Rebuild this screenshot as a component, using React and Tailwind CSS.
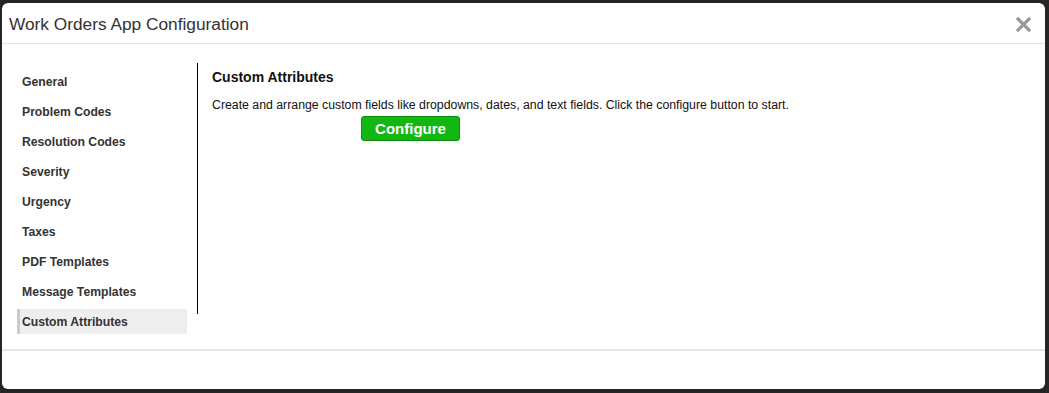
import React, { useState } from 'react'

const sections = [
  'General',
  'Problem Codes',
  'Resolution Codes',
  'Severity',
  'Urgency',
  'Taxes',
  'PDF Templates',
  'Message Templates',
  'Custom Attributes',
]

const App = () => {
  const [active, setActive] = useState('Custom Attributes')

  return (
    <div className="h-[393px] w-[1049px] bg-[#262626] pt-[3px] pl-[2px] pr-[4px] pb-[4px] font-['Liberation_Sans',Arial,sans-serif]">
      <div className="flex h-[386px] flex-col rounded-[6px] bg-white">
        {/* Header */}
        <div className="flex h-[41px] items-center justify-between border-b border-[#e5e5e5] pt-[3px] pl-[7px] pr-[14px]">
          <h3 className="text-[17.3px] text-[#333]">Work Orders App Configuration</h3>
          <button className="text-[#999]">
            <svg width="15" height="15" viewBox="0 0 15 15">
              <path d="M2 2L13 13M13 2L2 13" stroke="currentColor" strokeWidth="3.2" strokeLinecap="square" />
            </svg>
          </button>
        </div>

        {/* Body */}
        <div className="flex h-[305px] pt-[19px] pl-[15px]">
          <ul className="w-[172px] pt-[6px]">
            {sections.map((s) => (
              <li key={s}>
                <button
                  onClick={() => setActive(s)}
                  className={`flex h-[25px] w-[170px] mb-[5px] items-center pt-[1px] text-left text-[12.2px] font-bold text-[#333] ${
                    active === s ? 'border-l-[3px] border-[#ccc] bg-[#eee] pl-[2px]' : 'pl-[5px]'
                  }`}
                >
                  {s}
                </button>
              </li>
            ))}
          </ul>
          <div className="ml-[8px] h-[251px] border-l border-black pl-[14px] pt-[4px]">
            <h4 className="text-[14px] font-bold text-[#111]">Custom Attributes</h4>
            <p className="mt-[8px] text-[12.3px] text-[#111]">
              Create and arrange custom fields like dropdowns, dates, and text fields. Click the configure button to start.
            </p>
            <button className="ml-[149px] mt-[2px] h-[25px] w-[99px] rounded-[3px] border border-[#0b8f0b] bg-[#13b713] text-[15px] font-bold text-white">
              Configure
            </button>
          </div>
        </div>

        {/* Footer */}
        <div className="flex-1 border-t-2 border-[#e5e5e5]"></div>
      </div>
    </div>
  )
}

export default App
